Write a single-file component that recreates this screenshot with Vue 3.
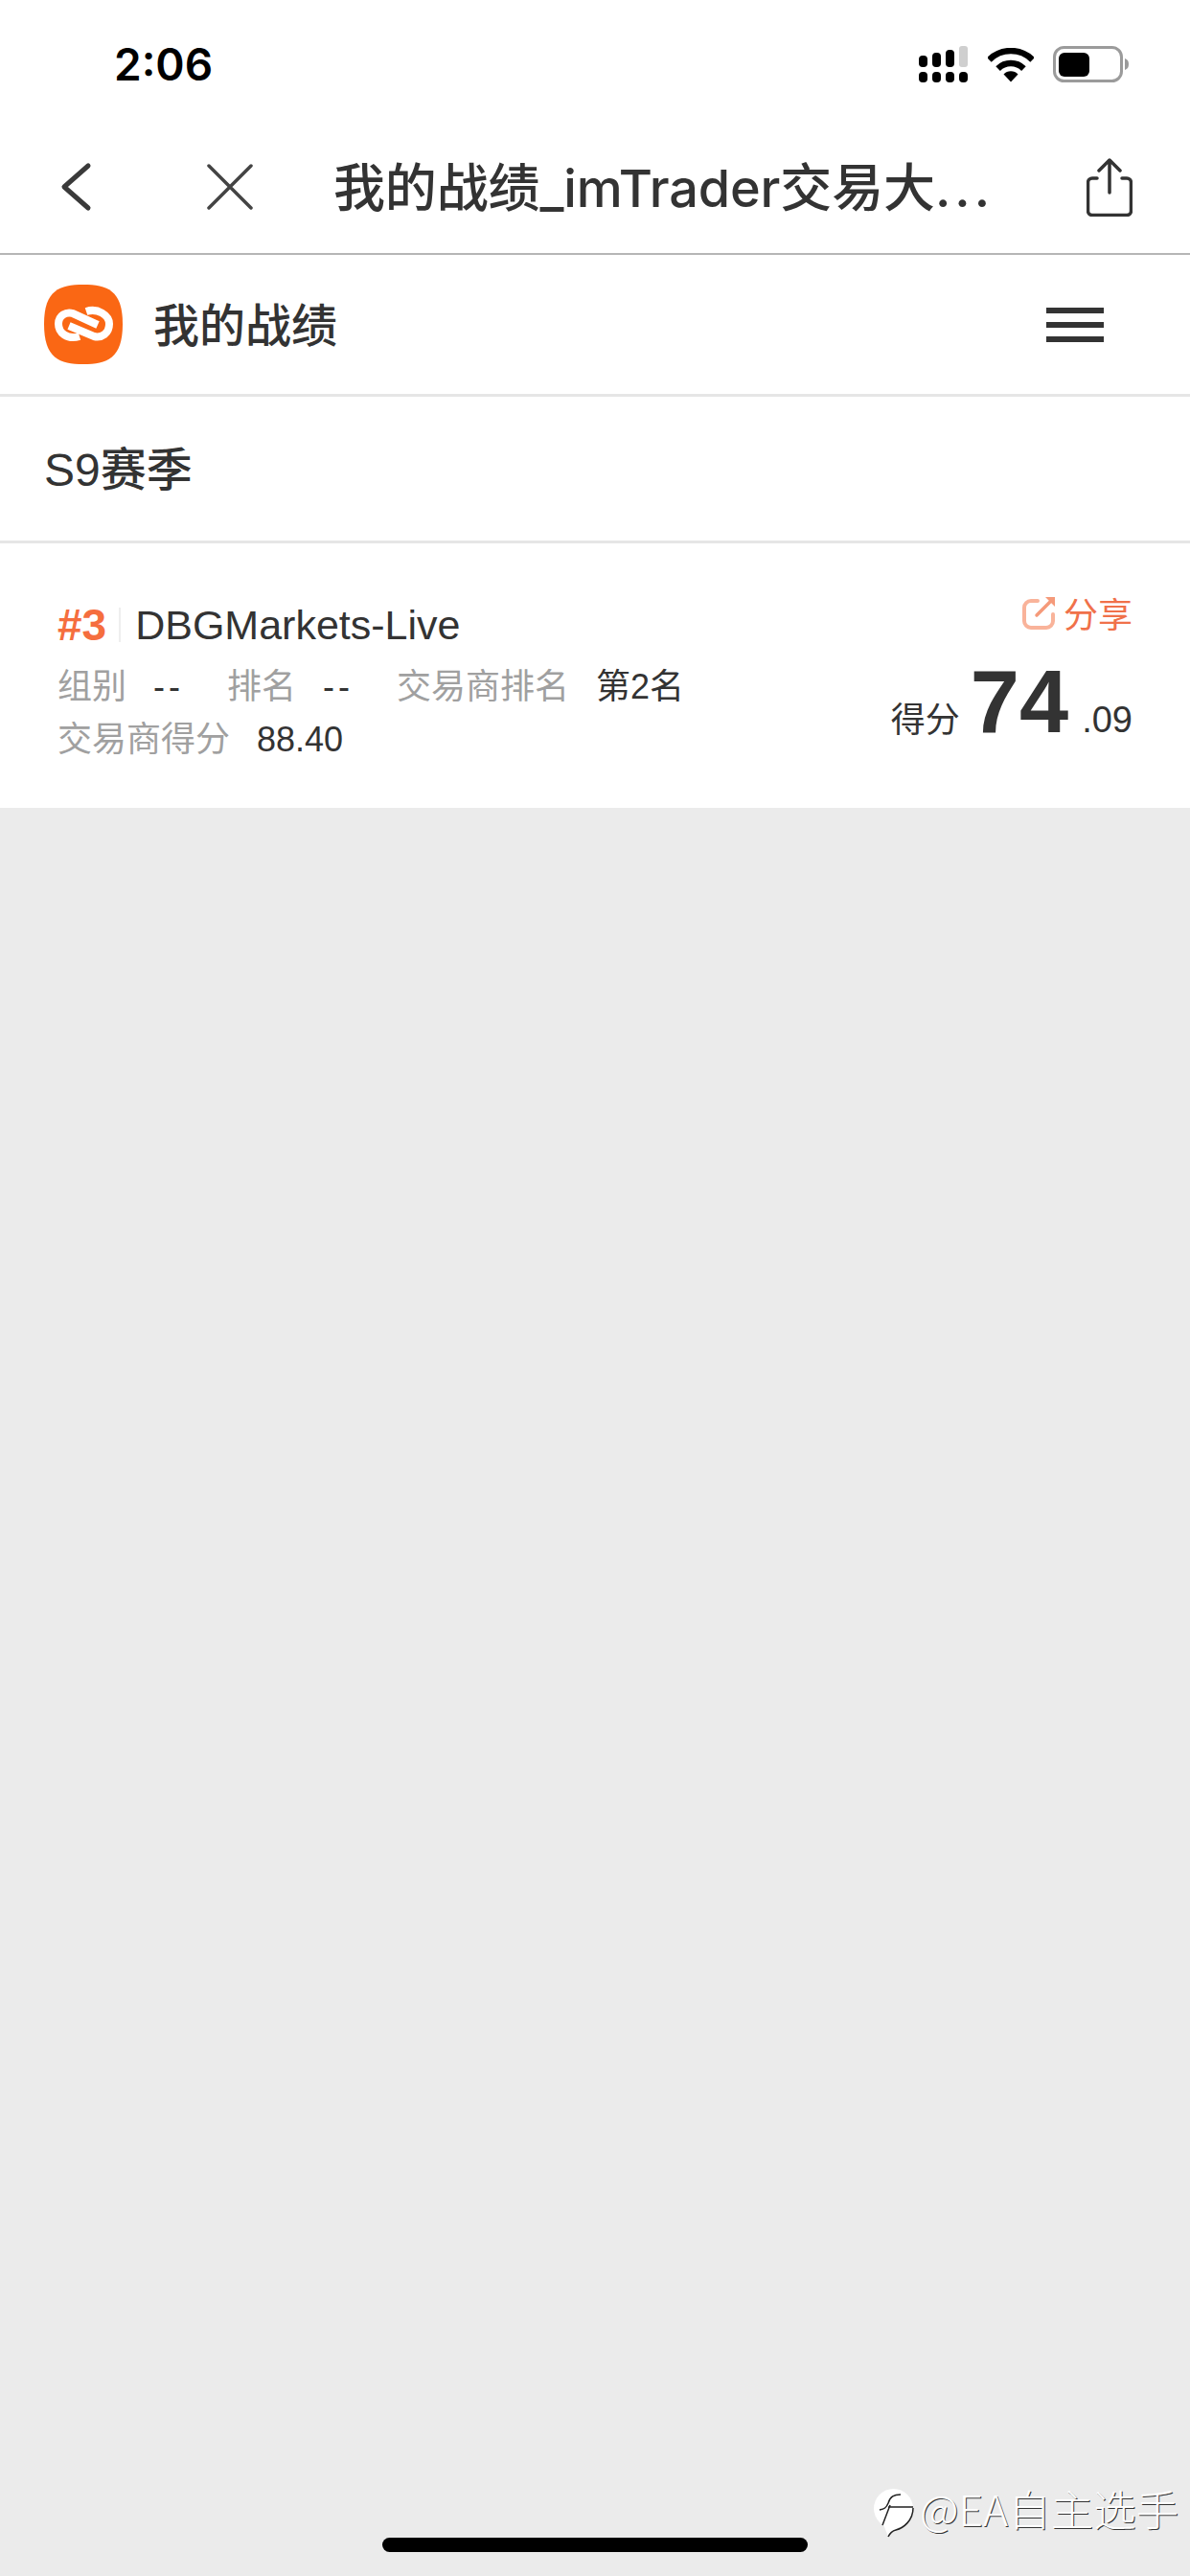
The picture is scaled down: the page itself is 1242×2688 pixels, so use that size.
<template>
  <div class="page">
    <div class="status-bar">
      <span class="time">2:06</span>
      <div class="status-icons">
        <svg class="signal" width="51" height="38" viewBox="0 0 51 38">
          <rect x="0" y="10" width="9" height="12" rx="4" fill="#000" />
          <rect x="14" y="7" width="9" height="15" rx="4" fill="#000" />
          <rect x="28" y="4" width="9" height="18" rx="4" fill="#000" />
          <rect x="42" y="0" width="9" height="22" rx="3" fill="#cfcfcf" />
          <rect x="0" y="27" width="9" height="11" rx="4" fill="#000" />
          <rect x="14" y="27" width="9" height="11" rx="4" fill="#000" />
          <rect x="28" y="27" width="9" height="11" rx="4" fill="#000" />
          <rect x="42" y="27" width="9" height="11" rx="4" fill="#000" />
        </svg>
        <svg class="wifi" width="48" height="36" viewBox="0 0 48 36">
          <path d="M1.4 12.4A32 32 0 0 1 46.6 12.4" fill="none" stroke="#000" stroke-width="6.5" />
          <path d="M10.6 21.6A19 19 0 0 1 37.4 21.6" fill="none" stroke="#000" stroke-width="6.5" />
          <path d="M24 35.5L16.5 27.5A10.5 10.5 0 0 1 31.5 27.5Z" fill="#000" />
        </svg>
        <svg class="battery" width="80" height="38" viewBox="0 0 80 38">
          <rect x="1.5" y="1.5" width="70" height="35" rx="10" fill="none" stroke="#9b9b9b" stroke-width="3" />
          <rect x="6" y="7" width="32" height="25" rx="6" fill="#000" />
          <path d="M75 13C78 14 79 16 79 19C79 22 78 24 75 25Z" fill="#9b9b9b" />
        </svg>
      </div>
    </div>

    <div class="nav-bar">
      <svg class="nav-back" width="33" height="52" viewBox="0 0 33 52">
        <path d="M29 4L4 26L29 48" fill="none" stroke="#3a3a3a" stroke-width="5" stroke-linecap="round" stroke-linejoin="round" />
      </svg>
      <svg class="nav-close" width="48" height="48" viewBox="0 0 48 48">
        <path d="M2 2L46 46M46 2L2 46" fill="none" stroke="#444" stroke-width="3.5" stroke-linecap="round" />
      </svg>
      <div class="nav-title">我的战绩_imTrader交易大<span class="dots">...</span></div>
      <svg class="nav-share" width="48" height="61" viewBox="0 0 48 61">
        <path d="M11 21H6a4.500 4.500 0 0 0-4.500 4.500V55A4.500 4.500 0 0 0 6 59.500H42A4.500 4.500 0 0 0 46.500 55V25.500A4.500 4.500 0 0 0 42 21H37" fill="none" stroke="#333" stroke-width="3.5" stroke-linecap="round" />
        <path d="M24 36V3M13 13L24 2L35 13" fill="none" stroke="#333" stroke-width="3.5" stroke-linecap="round" stroke-linejoin="round" />
      </svg>
    </div>

    <div class="head-bar">
      <svg class="logo" width="82" height="83" viewBox="0 0 82 83">
        <path d="M41 0C66 0 82 6 82 41C82 77 66 83 41 83C16 83 0 77 0 41C0 6 16 0 41 0Z" fill="#fa6714" />
        <path d="M37 54C24 58 15 50 15 41C15 32 23 28 30 30L56 42" fill="none" stroke="#fff" stroke-width="8" />
        <path d="M44 28C56 24 68 32 68 41C68 51 60 56 52 54L26 43" fill="none" stroke="#fff" stroke-width="8" />
      </svg>
      <span class="head-title">我的战绩</span>
      <div class="menu">
        <i></i><i></i><i></i>
      </div>
    </div>

    <div class="season">S9赛季</div>

    <div class="card">
      <div class="card-left">
        <div class="name-row">
          <span class="rank">#3</span>
          <span class="name">DBGMarkets-Live</span>
        </div>
        <div class="meta-row">
          <span class="label">组别</span><span class="val dash">--</span>
          <span class="label">排名</span><span class="val dash">--</span>
          <span class="label">交易商排名</span><span class="val">第2名</span>
        </div>
        <div class="meta-row">
          <span class="label">交易商得分</span><span class="val">88.40</span>
        </div>
      </div>
      <div class="card-right">
        <div class="share">
          <svg width="36" height="36" viewBox="0 0 36 36">
            <path d="M16 6H9a7 7 0 0 0-7 7V27a7 7 0 0 0 7 7H25a7 7 0 0 0 7-7V20" fill="none" stroke="#f9b39a" stroke-width="4" stroke-linecap="round" />
            <path d="M15 21L29 7" fill="none" stroke="#f59a7a" stroke-width="3.500" stroke-linecap="round" />
            <path d="M34 2V12L24 2Z" fill="#f59a7a" />
          </svg>
          <span>分享</span>
        </div>
        <div class="score">
          <span class="score-label">得分</span>
          <span class="score-int">74</span>
          <span class="score-dec">.09</span>
        </div>
      </div>
    </div>

    <div class="watermark">
      <svg width="55" height="60" viewBox="0 0 55 60">
        <circle cx="27.500" cy="27.500" r="20.500" fill="#fff" />
        <path d="M17 44L22 57C25 53 28 51 33 49Z" fill="#fff" />
        <path d="M13 29C18 28 20 27 22 22C24 15 28 13 35 13M22 26H48M24 24L16 45M48 27C48 40 38 48 30 50C26 51 24 53 22 57" fill="none" stroke="#222" stroke-width="1.500" />
      </svg>
      <span>@EA自主选手</span>
    </div>
    <div class="home-indicator"></div>
  </div>
</template>

<script setup>
</script>

<style scoped>
.page {
  position: relative;
  height: 2688px;
  overflow: hidden;
  background: #ebebeb;
  color: #333;
  font-family: "Liberation Sans", "Noto Sans CJK SC", sans-serif;
}

/* status bar */
.status-bar {
  height: 130px;
  display: flex;
  align-items: flex-start;
  justify-content: space-between;
  background: #fff;
  padding: 38px 63px 0 119px;
  box-sizing: border-box;
}
.time {
  font-family: Inter, sans-serif;
  font-size: 46px;
  font-weight: 600;
  line-height: 58px;
  color: #000;
}
.status-icons {
  display: flex;
  align-items: flex-start;
  padding-top: 10px;
}
.wifi {
  margin-left: 21px;
  margin-top: 2px;
}
.battery {
  margin-left: 20px;
}

/* browser nav */
.nav-bar {
  height: 134px;
  display: flex;
  align-items: center;
  background: #fff;
  border-bottom: 2px solid #b6b6b6;
}
.nav-back {
  margin-left: 63px;
  margin-top: -5px;
  flex: none;
}
.nav-close {
  margin-left: 120px;
  margin-top: -5px;
  flex: none;
}
.nav-title {
  margin-left: 84px;
  flex: none;
  font-family: Inter, "Noto Sans CJK SC", sans-serif;
  font-size: 54px;
  font-weight: 500;
  letter-spacing: -0.15px;
  line-height: 64px;
  white-space: nowrap;
  color: #333;
}
.dots {
  letter-spacing: 4px;
}
.nav-share {
  margin-left: auto;
  margin-right: 60px;
  margin-top: -3px;
  flex: none;
}

/* page header */
.head-bar {
  height: 145px;
  display: flex;
  align-items: center;
  padding-left: 46px;
  padding-right: 90px;
  background: #fff;
  border-bottom: 3px solid #e6e6e6;
}
.logo {
  flex: none;
}
.head-title {
  margin-left: 32px;
  margin-top: -5px;
  font-size: 48px;
  font-weight: 500;
  color: #333;
}
.menu {
  margin-left: auto;
  width: 60px;
  display: flex;
  flex-direction: column;
  gap: 9px;
}
.menu i {
  display: block;
  height: 6px;
  background: #333;
}

.season {
  height: 150px;
  line-height: 153px;
  padding-left: 46px;
  font-size: 48px;
  font-weight: 500;
  background: #fff;
  color: #333;
  border-bottom: 3px solid #e6e6e6;
}

/* record card */
.card {
  height: 276px;
  box-sizing: border-box;
  background: #fff;
  display: flex;
  justify-content: space-between;
  padding: 0 60px 0 60px;
}
.card-left {
  padding-top: 60px;
}
.name-row {
  display: flex;
  align-items: center;
  height: 50px;
  margin-bottom: 12px;
}
.rank {
  font-size: 46px;
  font-weight: 700;
  color: #f56e3e;
  padding-right: 13px;
  border-right: 2px solid #eee;
  line-height: 36px;
}
.name {
  font-size: 43px;
  margin-left: 15px;
  color: #333;
}
.meta-row {
  height: 55px;
  line-height: 55px;
  font-size: 36px;
  white-space: nowrap;
  display: flex;
}
.label {
  color: #a0a0a0;
}
.val {
  margin-left: 28px;
  color: #333;
}
.dash {
  width: 30px;
  margin-right: 47px;
  letter-spacing: 4px;
}
.card-right {
  display: flex;
  flex-direction: column;
  align-items: flex-end;
  padding-top: 54px;
}
.share {
  display: flex;
  align-items: center;
  gap: 7px;
  font-size: 36px;
  color: #f0714a;
  height: 36px;
}
.score {
  display: flex;
  align-items: baseline;
  margin-top: 23px;
  color: #333;
}
.score-label {
  font-size: 36px;
}
.score-int {
  font-size: 92px;
  font-weight: 700;
  margin-left: 11px;
}
.score-dec {
  font-size: 38px;
  margin-left: 14px;
}

/* overlays at the bottom of the screen */
.watermark {
  position: absolute;
  left: 905px;
  top: 2590px;
  display: flex;
  align-items: flex-start;
  color: #fff;
  font-size: 44.5px;
  line-height: 54px;
  font-weight: 300;
  font-family: "Noto Sans CJK SC", sans-serif;
  text-shadow: 1px 1px 0 #333;
  white-space: nowrap;
}
.home-indicator {
  position: absolute;
  left: 399px;
  top: 2648px;
  width: 444px;
  height: 15px;
  border-radius: 8px;
  background: #000;
}
</style>
